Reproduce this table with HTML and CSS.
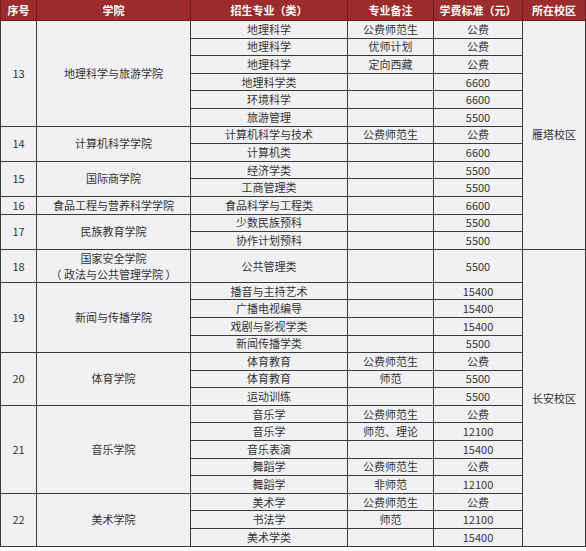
FILE: index.html
```html
<!DOCTYPE html>
<html lang="zh-CN">
<head>
<meta charset="utf-8">
<title>招生专业学费标准</title>
<link rel="stylesheet" href="styles.css">
</head>
<body>
<table class="fees">
  <colgroup>
    <col class="c-no"><col class="c-college"><col class="c-major"><col class="c-note"><col class="c-fee"><col class="c-campus">
  </colgroup>
  <thead>
    <tr><th>序号</th><th>学院</th><th>招生专业（类）</th><th>专业备注</th><th>学费标准（元）</th><th>所在校区</th></tr>
  </thead>
  <tbody>
    <tr><td rowspan="6">13</td><td rowspan="6">地理科学与旅游学院</td><td>地理科学</td><td>公费师范生</td><td>公费</td><td rowspan="13" class="campus">雁塔校区</td></tr>
    <tr><td>地理科学</td><td>优师计划</td><td>公费</td></tr>
    <tr><td>地理科学</td><td>定向西藏</td><td>公费</td></tr>
    <tr><td>地理科学类</td><td></td><td>6600</td></tr>
    <tr><td>环境科学</td><td></td><td>6600</td></tr>
    <tr><td>旅游管理</td><td></td><td>5500</td></tr>

    <tr><td rowspan="2">14</td><td rowspan="2">计算机科学学院</td><td>计算机科学与技术</td><td>公费师范生</td><td>公费</td></tr>
    <tr><td>计算机类</td><td></td><td>6600</td></tr>

    <tr><td rowspan="2">15</td><td rowspan="2">国际商学院</td><td>经济学类</td><td></td><td>5500</td></tr>
    <tr><td>工商管理类</td><td></td><td>5500</td></tr>

    <tr><td>16</td><td>食品工程与营养科学学院</td><td>食品科学与工程类</td><td></td><td>6600</td></tr>

    <tr><td rowspan="2">17</td><td rowspan="2">民族教育学院</td><td>少数民族预科</td><td></td><td>5500</td></tr>
    <tr><td>协作计划预科</td><td></td><td>5500</td></tr>

    <tr class="tall"><td>18</td><td><span class="line">国家安全学院</span><span class="line">（ 政法与公共管理学院 ）</span></td><td>公共管理类</td><td></td><td>5500</td><td rowspan="16" class="campus">长安校区</td></tr>

    <tr><td rowspan="4">19</td><td rowspan="4">新闻与传播学院</td><td>播音与主持艺术</td><td></td><td>15400</td></tr>
    <tr><td>广播电视编导</td><td></td><td>15400</td></tr>
    <tr><td>戏剧与影视学类</td><td></td><td>15400</td></tr>
    <tr><td>新闻传播学类</td><td></td><td>5500</td></tr>

    <tr><td rowspan="3">20</td><td rowspan="3">体育学院</td><td>体育教育</td><td>公费师范生</td><td>公费</td></tr>
    <tr><td>体育教育</td><td>师范</td><td>5500</td></tr>
    <tr><td>运动训练</td><td></td><td>5500</td></tr>

    <tr><td rowspan="5">21</td><td rowspan="5">音乐学院</td><td>音乐学</td><td>公费师范生</td><td>公费</td></tr>
    <tr><td>音乐学</td><td>师范、理论</td><td>12100</td></tr>
    <tr><td>音乐表演</td><td></td><td>15400</td></tr>
    <tr><td>舞蹈学</td><td>公费师范生</td><td>公费</td></tr>
    <tr><td>舞蹈学</td><td>非师范</td><td>12100</td></tr>

    <tr><td rowspan="3">22</td><td rowspan="3">美术学院</td><td>美术学</td><td>公费师范生</td><td>公费</td></tr>
    <tr><td>书法学</td><td>师范</td><td>12100</td></tr>
    <tr><td>美术学类</td><td></td><td>15400</td></tr>
  </tbody>
</table>
</body>
</html>
```

FILE: styles.css
```css
html, body {
  margin: 0;
  padding: 0;
  background: #ffffff;
}

.fees {
  width: 585px;
  table-layout: fixed;
  border-collapse: collapse;
  font-family: "Noto Sans CJK SC", "Noto Sans", sans-serif;
  font-size: 11px;
  color: #333333;
  background: #f1f1f3;
  border-left: 1px solid #a0a0a0;
  border-right: 1px solid #a0a0a0;
  border-bottom: 1px solid #555555;
}

.c-no { width: 36px; }
.c-college { width: 154px; }
.c-major { width: 157px; }
.c-note { width: 86px; }
.c-fee { width: 89px; }
.c-campus { width: 63px; }

.fees th {
  height: 20px;
  padding: 0;
  background: #9c2b2b;
  color: #ffffff;
  font-weight: 700;
  font-size: 11px;
  line-height: 14px;
  border: 1px solid #6e1e1e;
  border-top: none;
  text-align: center;
}

.fees td {
  height: 16.6px;
  padding: 0;
  line-height: 13px;
  text-align: center;
  vertical-align: middle;
  border: 1px solid #3a3a3a;
  white-space: nowrap;
}

.fees tr.tall td {
  height: 32px;
  line-height: 16px;
}

.line {
  display: block;
  line-height: 16px;
}

.fees td.campus {
  border-bottom: 1px solid #3a3a3a;
}
```
